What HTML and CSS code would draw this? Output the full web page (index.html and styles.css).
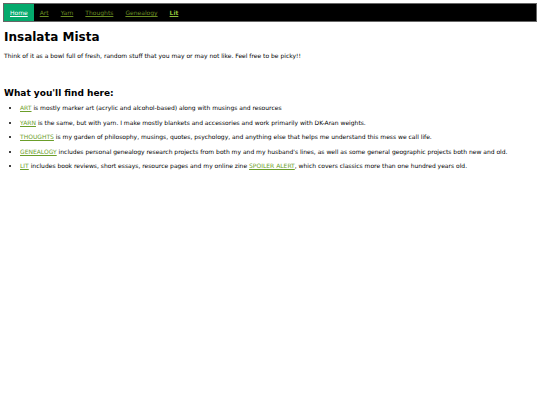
FILE: index.html
```html
<!DOCTYPE html>
<html>
<head>
<meta charset="utf-8">
<link rel="stylesheet" href="styles.css">
</head>
<body>
<nav class="topnav">
  <a class="active" href="#">Home</a>
  <a href="#">Art</a>
  <a href="#">Yarn</a>
  <a href="#">Thoughts</a>
  <a href="#">Genealogy</a>
  <a class="lit" href="#">Lit</a>
</nav>
<h1 class="title">Insalata Mista</h1>
<p class="intro">Think of it as a bowl full of fresh, random stuff that you may or may not like. Feel free to be picky!!</p>
<h2 class="sub">What you'll find here:</h2>
<ul class="list">
  <li><a href="#">ART</a> is mostly marker art (acrylic and alcohol-based) along with musings and resources</li>
  <li><a href="#">YARN</a> is the same, but with yarn. I make mostly blankets and accessories and work primarily with DK-Aran weights.</li>
  <li><a href="#">THOUGHTS</a> is my garden of philosophy, musings, quotes, psychology, and anything else that helps me understand this mess we call life.</li>
  <li><a href="#">GENEALOGY</a> includes personal genealogy research projects from both my and my husband's lines, as well as some general geographic projects both new and old.</li>
  <li><a href="#">LIT</a> includes book reviews, short essays, resource pages and my online zine <a href="#">SPOILER ALERT</a>, which covers classics more than one hundred years old.</li>
</ul>
</body>
</html>
```

FILE: styles.css
```css
html, body { background: #fff; }
body {
  margin: 3px;
  font-family: "DejaVu Sans", Verdana, sans-serif;
  color: #000;
}
.topnav {
  display: flex;
  background: #000;
  border: 1px solid #666;
  height: 17px;
  align-items: stretch;
}
.topnav a {
  display: flex;
  align-items: center;
  padding: 0 6px;
  font-size: 6px;
  color: #6b8e23;
  text-decoration: underline;
}
.topnav a.active {
  background: #04aa6d;
  color: #fff;
}
.topnav a.lit {
  color: #8fc23a;
  font-weight: bold;
}
.title {
  font-size: 12px;
  font-weight: bold;
  margin: 7px 0 0 1px;
  line-height: 16px;
}
.intro {
  font-size: 6px;
  line-height: 8px;
  margin: 7px 0 0 1px;
}
.sub {
  font-size: 9px;
  line-height: 12px;
  margin: 27px 0 0 1px;
}
.list {
  margin: 5px 0 0 0;
  padding-left: 17px;
  font-size: 6px;
  line-height: 8px;
}
.list li { margin-bottom: 6.6px; }
.list a { color: #6b9e2a; }
```
